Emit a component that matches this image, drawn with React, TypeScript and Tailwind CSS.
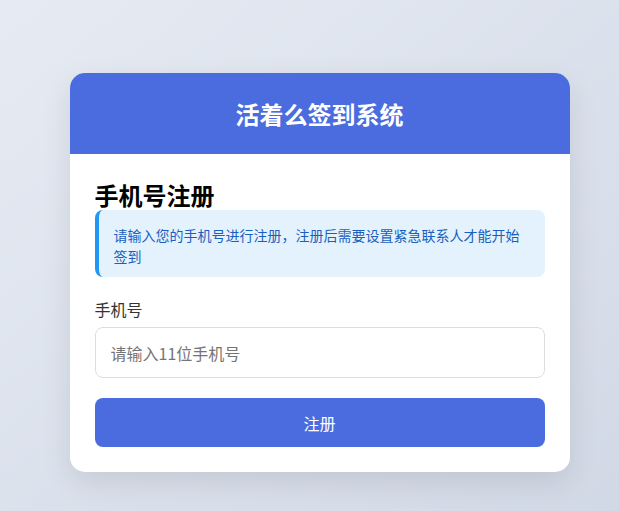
export default function App() {
    return (
        <div
            className="min-h-[511px] w-full bg-gradient-to-br from-[#e6ebf3] to-[#d2d9e6] pl-5 pt-[73px] pb-10 flex justify-center items-start"
            style={{ fontFamily: '"Noto Sans CJK SC", "Noto Sans", sans-serif' }}
        >
            <div className="w-[500px] bg-white rounded-[15px] overflow-hidden shadow-[0_10px_30px_rgba(0,0,0,0.1)]">
                {/* Header */}
                <div className="h-[81px] bg-[#4a6cde] flex items-center justify-center">
                    <h1 className="text-[24px] font-bold text-white leading-none">活着么签到系统</h1>
                </div>

                {/* Body */}
                <div className="px-[25px] pt-[26px] pb-[25px]">
                    <h2 className="text-[24px] font-bold text-black leading-[30px]">手机号注册</h2>

                    <div className="bg-[#e3f2fd] border-l-4 border-[#2196f3] rounded-lg pl-[15px] pr-[20px] pt-[15px] pb-[10px]">
                        <p className="text-[14px] leading-[21px] text-[#1a5fbd]">
                            请输入您的手机号进行注册，注册后需要设置紧急联系人才能开始签到
                        </p>
                    </div>

                    <div className="mt-[20px]">
                        <label className="block text-[16px] leading-[24px] text-[#333] mb-[6px]">手机号</label>
                        <input
                            type="text"
                            placeholder="请输入11位手机号"
                            className="w-full h-[51px] border border-[#dddddd] rounded-lg px-[15px] text-[16px] text-[#333] placeholder:text-[#757575] outline-none"
                        />
                    </div>

                    <button className="mt-[20px] w-full h-[49px] bg-[#4a6cde] rounded-lg text-white text-[16px]">
                        注册
                    </button>
                </div>
            </div>
        </div>
    );
}
